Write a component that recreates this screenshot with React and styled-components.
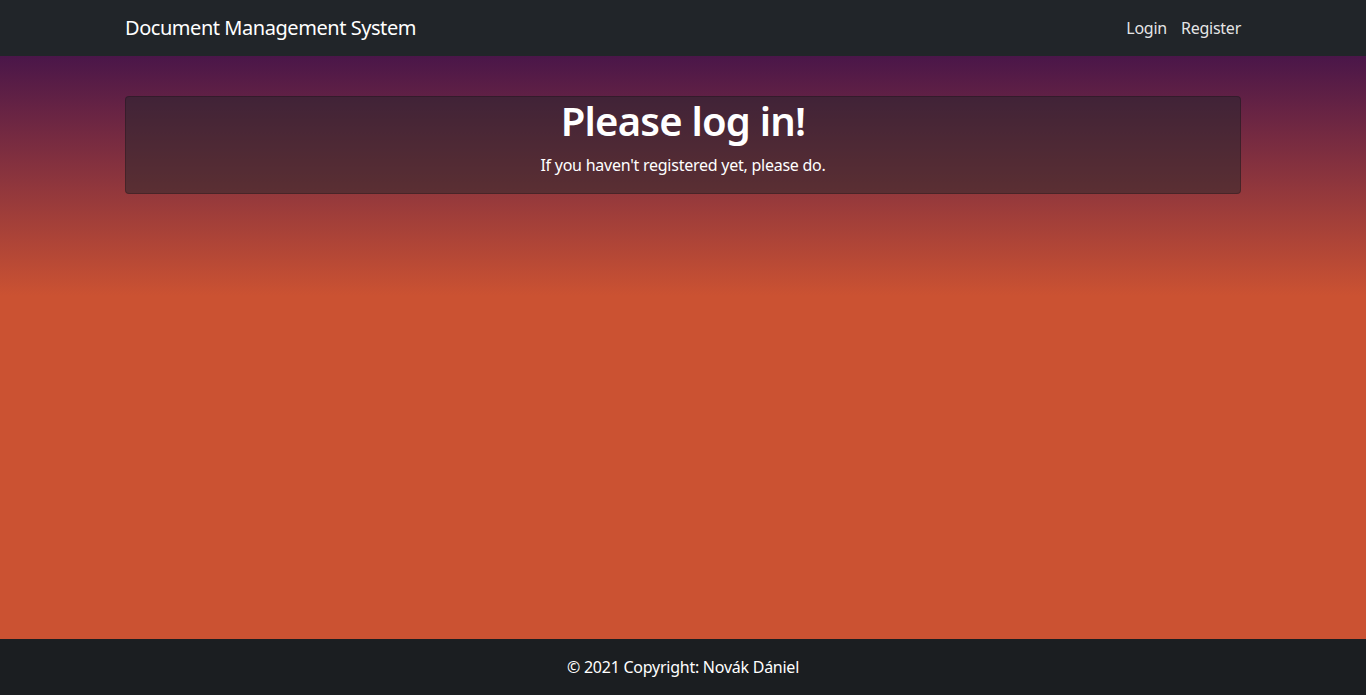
import React from 'react'
import styled, { createGlobalStyle } from 'styled-components'

const GlobalStyle = createGlobalStyle`
    * { box-sizing: border-box; }
    html, body, #root { height: 100%; }
    body {
        margin: 0;
        font-family: "Noto Sans", "Open Sans", sans-serif;
        font-size: 16px;
        line-height: 1.5;
        letter-spacing: -0.25px;
        color: #fff;
        background: #cb5232;
    }
`

function App()
{
    return (
        <>
            <GlobalStyle />
            <Page>
                <Navbar>
                    <Container>
                        <Brand href='#'>Document Management System</Brand>
                        <NavLinks>
                            <NavLink href='#'>Login</NavLink>
                            <NavLink href='#'>Register</NavLink>
                        </NavLinks>
                    </Container>
                </Navbar>

                <Main>
                    <Container>
                        <Card>
                            <Title>Please log in!</Title>
                            <Lead>If you haven't registered yet, please do.</Lead>
                        </Card>
                    </Container>
                </Main>

                <Footer>© 2021 Copyright: Novák Dániel</Footer>
            </Page>
        </>
    )
}

export default App

const Page = styled.div`
    min-height: 100%;
    display: flex;
    flex-direction: column;
`

const Navbar = styled.nav`
    height: 56px;
    background: #212529;
    display: flex;
    align-items: center;
`

const Container = styled.div`
    width: 1140px;
    margin: 0 auto;
    padding: 0 12px;
    display: flex;
    align-items: center;
    justify-content: space-between;
`

const Brand = styled.a`
    color: #fff;
    text-decoration: none;
    font-size: 20px;
    letter-spacing: -0.45px;
`

const NavLinks = styled.div`
    display: flex;
    margin-right: -7px;
`

const NavLink = styled.a`
    color: rgba(255, 255, 255, 0.9);
    text-decoration: none;
    padding: 8px 7px;
`

const Main = styled.main`
    flex: 1;
    padding-top: 40px;
    background: linear-gradient(180deg, #4a1649 0px, #cb5232 240px, #cb5232 100%);
`

const Card = styled.div`
    width: 100%;
    background: rgba(33, 37, 41, 0.5);
    border: 1px solid rgba(0, 0, 0, 0.2);
    border-radius: 4px;
    text-align: center;
    padding-bottom: 16px;
`

const Title = styled.h1`
    margin: 0 0 8px;
    font-size: 40px;
    font-weight: 600;
    line-height: 1.2;
    letter-spacing: -0.8px;
`

const Lead = styled.p`
    margin: 0;
`

const Footer = styled.footer`
    height: 56px;
    background: #1b1e21;
    display: flex;
    align-items: center;
    justify-content: center;
`
